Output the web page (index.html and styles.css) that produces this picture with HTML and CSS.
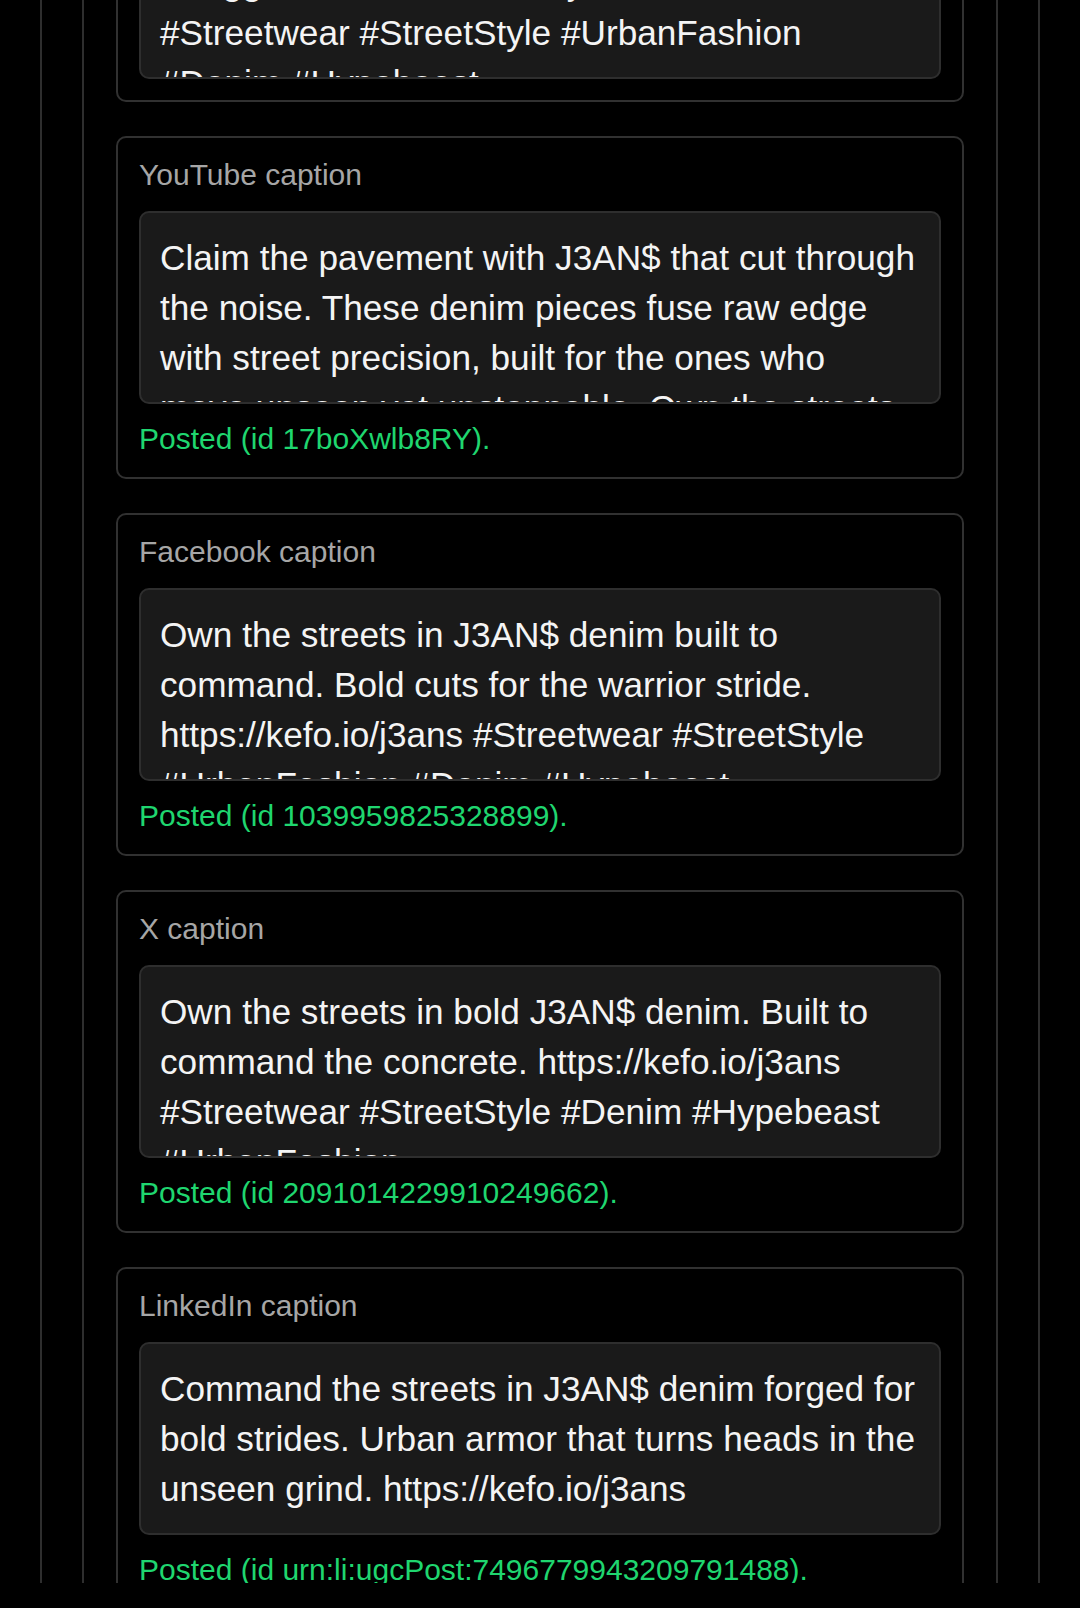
FILE: index.html
```html
<!DOCTYPE html>
<html lang="en">
<head>
<meta charset="utf-8">
<title>Captions</title>
<link rel="stylesheet" href="styles.css">
</head>
<body>
<div class="viewport">
  <div class="shell">
    <div class="panel">
      <div class="feed">
        <section class="card">
          <div class="card-label">Instagram caption</div>
          <div class="caption-box">Step into J3AN$ denim made for the bold.<br>A rugged fit built for the city streets. Stand tall.<br>#Streetwear #StreetStyle #UrbanFashion #Denim #Hypebeast</div>
        </section>
        <section class="card">
          <div class="card-label">YouTube caption</div>
          <div class="caption-box">Claim the pavement with J3AN$ that cut through the noise. These denim pieces fuse raw edge with street precision, built for the ones who move unseen yet unstoppable. Own the streets in J3AN$. https://kefo.io/j3ans #Streetwear #StreetStyle #UrbanFashion #Denim #Hypebeast</div>
          <div class="status">Posted (id 17boXwlb8RY).</div>
        </section>
        <section class="card">
          <div class="card-label">Facebook caption</div>
          <div class="caption-box">Own the streets in J3AN$ denim built to command. Bold cuts for the warrior stride. https://kefo.io/j3ans #Streetwear #StreetStyle #UrbanFashion #Denim #Hypebeast</div>
          <div class="status">Posted (id 1039959825328899).</div>
        </section>
        <section class="card">
          <div class="card-label">X caption</div>
          <div class="caption-box">Own the streets in bold J3AN$ denim. Built to command the concrete. https://kefo.io/j3ans #Streetwear #StreetStyle #Denim #Hypebeast #UrbanFashion</div>
          <div class="status">Posted (id 2091014229910249662).</div>
        </section>
        <section class="card">
          <div class="card-label">LinkedIn caption</div>
          <div class="caption-box">Command the streets in J3AN$ denim forged for bold strides. Urban armor that turns heads in the unseen grind. https://kefo.io/j3ans</div>
          <div class="status">Posted (id urn:li:ugcPost:7496779943209791488).</div>
        </section>
      </div>
    </div>
  </div>
</div>
</body>
</html>
```

FILE: styles.css
```css
* {
  box-sizing: border-box;
}

html,
body {
  margin: 0;
  padding: 0;
  background: #000;
}

body {
  font-family: "Liberation Sans", Arial, sans-serif;
  color: #f2f2f2;
}

.viewport {
  height: 1583px;
  overflow: hidden;
}

.shell {
  margin: 0 40px;
  padding: 0 40px;
  border-left: 2px solid #2e2e2e;
  border-right: 2px solid #2e2e2e;
  display: flow-root;
}

.panel {
  padding: 0 32px;
  border-left: 2px solid #2e2e2e;
  border-right: 2px solid #2e2e2e;
  display: flow-root;
}

.feed {
  display: flex;
  flex-direction: column;
  gap: 34px;
  margin-top: -189px;
}

.card {
  border: 2px solid #313131;
  border-radius: 10px;
  padding: 20px 21px 21px;
  background: #000;
}

.card-label {
  font-size: 30px;
  line-height: 34px;
  color: #a6a6a6;
  margin-bottom: 19px;
}

.caption-box {
  height: 193px;
  overflow: hidden;
  background: #1a1a1a;
  border: 2px solid #2e2e2e;
  border-radius: 10px;
  padding: 20px 21px 0 19px;
  font-size: 35.2px;
  line-height: 50px;
  color: #f4f4f4;
}

.status {
  margin-top: 18px;
  font-size: 30px;
  line-height: 34px;
  color: #1fd66f;
}
```
